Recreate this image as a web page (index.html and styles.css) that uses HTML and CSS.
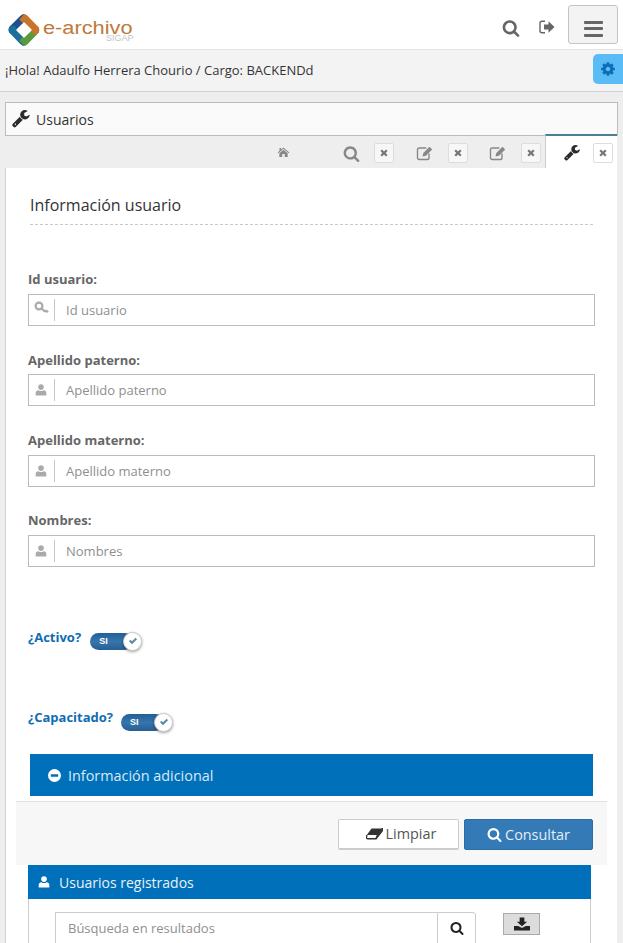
FILE: index.html
```html
<!DOCTYPE html>
<html lang="es">
<head>
<meta charset="utf-8">
<title>e-archivo</title>
<link rel="stylesheet" href="styles.css">
</head>
<body>
<svg class="defs" width="0" height="0" aria-hidden="true">
  <symbol id="i-search" viewBox="0 0 1792 1792"><path d="M1216 832q0-185-131.5-316.5t-316.5-131.5-316.5 131.5-131.5 316.5 131.5 316.5 316.5 131.5 316.5-131.5 131.5-316.5zm512 832q0 52-38 90t-90 38q-54 0-90-38l-343-342q-179 124-399 124-143 0-273.5-55.5t-225-150-150-225-55.5-273.5 55.5-273.5 150-225 225-150 273.5-55.5 273.5 55.5 225 150 150 225 55.5 273.5q0 220-124 399l343 343q37 37 37 90z"/></symbol>
  <symbol id="i-wrench" viewBox="0 0 1792 1792"><path d="M384 1344q0-26-19-45t-45-19-45 19-19 45 19 45 45 19 45-19 19-45zm644-420l-682 682q-37 37-90 37-52 0-91-37l-106-108q-38-36-38-90 0-53 38-91l681-681q39 98 114.5 173.5t173.5 114.5zm634-435q0 39-23 106-47 134-164.5 217.5t-258.5 83.5q-185 0-316.5-131.5t-131.5-316.5 131.5-316.5 316.5-131.5q58 0 121.5 16.5t107.5 46.5q16 11 16 28t-16 28l-293 169v224l193 107q5-3 79-48.5t135.5-81 70.5-35.5q15 0 23.5 10t8.5 25z"/></symbol>
  <symbol id="i-cog" viewBox="0 0 1792 1792"><path d="M1152 896q0-106-75-181t-181-75-181 75-75 181 75 181 181 75 181-75 75-181zm512-109v222q0 12-8 23t-20 13l-185 28q-19 54-39 91 35 50 107 138 10 12 10 25t-9 23q-27 37-99 108t-94 71q-12 0-26-9l-138-108q-44 23-91 38-16 136-29 186-7 28-36 28h-222q-14 0-24.5-8.5t-11.5-21.5l-28-184q-49-16-90-37l-141 107q-10 9-25 9-14 0-25-11-126-114-165-168-7-10-7-23 0-12 8-23 15-21 51-66.5t54-70.5q-27-50-41-99l-183-27q-13-2-21-12.5t-8-23.5v-222q0-12 8-23t19-13l186-28q14-46 39-92-40-57-107-138-10-12-10-24 0-10 9-23 26-36 98.5-107.5t94.5-71.5q13 0 26 10l138 107q44-23 91-38 16-136 29-186 7-28 36-28h222q14 0 24.5 8.5t11.5 21.5l28 184q49 16 90 37l142-107q9-9 24-9 13 0 25 10 129 119 165 170 7 8 7 22 0 12-8 23-15 21-51 66.5t-54 70.5q26 50 41 98l183 28q13 2 21 12.5t8 23.5z"/></symbol>
  <symbol id="i-user" viewBox="0 0 14 14"><circle cx="7" cy="3.6" r="3.3"/><path d="M.8 13.4V10.300C.8 8.500 2.300 7.200 4 7.200c.9.700 1.900 1 3 1s2.100-.3 3-1c1.700 0 3.200 1.300 3.200 3.100v3.100z"/></symbol>
  <symbol id="i-home" viewBox="0 0 14 12"><path d="M7 .5 14 6.500l-.8.900L7 2.200.8 7.400 0 6.500 2.200 4.600V1.200h2v1.700z"/><path d="M7 3.300 12 7.500V12H8.500V8.500h-3V12H2V7.500z"/></symbol>
  <symbol id="i-edit" viewBox="0 0 18 16"><path class="stroke" d="M13 8.500v4.200c0 1-.8 1.800-1.800 1.800H3.300c-1 0-1.800-.8-1.800-1.800V4.800c0-1 .8-1.800 1.800-1.800h7"/><path d="M6.500 11.500 7.300 8 13.500 1.800l2.700 2.700L10 10.700z"/></symbol>
  <symbol id="i-times" viewBox="0 0 8 8"><path d="M2 .4 4 2.400 6 .4 7.600 2 5.600 4 7.600 6 6 7.600 4 5.600 2 7.600.4 6 2.400 4 .4 2z"/></symbol>
  <symbol id="i-logout" viewBox="0 0 16 14"><path class="stroke" d="M6 1.200H3c-1.100 0-2 .9-2 2v7.600c0 1.100.9 2 2 2h3"/><path d="M5 4.500h4.500V1.200L15.500 7l-6 5.800V9.500H5z"/></symbol>
  <symbol id="i-key" viewBox="0 0 15 13"><circle class="stroke2" cx="5" cy="5" r="3.400"/><path class="stroke2" d="M7.500 7.500 10.500 10l2-.2 1.500 1.400"/></symbol>
  <symbol id="i-eraser" viewBox="0 0 17 12"><path d="M5.500.5H16.500L11.500 7H.8z"/><path class="stroke" d="M.8 7 .5 9.500c0 .6.400 1.200 1 1.200h8.500L11.500 7"/><path class="stroke" d="M11.500 7 16.500.5 16.200 3 10 10.700"/></symbol>
  <symbol id="i-minus" viewBox="0 0 14 14"><path fill-rule="evenodd" d="M7 0a7 7 0 1 0 0 14A7 7 0 0 0 7 0zM3 5.600h8v2.800H3z"/></symbol>
  <symbol id="i-download" viewBox="0 0 17 14"><path d="M6 0h5v4.500h3L8.500 9.500 3 4.500h3z"/><path d="M0 9h4.500l4 2.300 4-2.300H17v5H0z"/></symbol>
  <symbol id="i-check" viewBox="0 0 12 10"><path d="M1 5.200 2.800 3.400 4.800 5.400 9.200 1 11 2.800 4.800 9z"/></symbol>
</svg>

<header class="topbar">
  <div class="logo">
    <svg class="logo-mark" viewBox="0 0 34 34" aria-hidden="true">
      <path d="M17 0Q15 0 13 2L1.500 13.500Q0 15.500 1.500 20L7 23.500 12 17 17 11 22 6z" fill="#1f4f8f"/>
      <path d="M1.500 14Q-.5 17 1.500 20L13 32Q15 34 17 34L22 28 17 23 11 17 6 12z" fill="#1b6f9c"/>
      <path d="M17 34Q19 34 21 32L32.500 20Q34 17 32.500 14L28 12 23 17 17 23 12 28z" fill="#5b9a3c"/>
      <path d="M32.500 20Q34 17 32.500 14L21 2Q19 0 17 0L12 6 17 11 23 17 28 22z" fill="#c8742c"/>
      <path d="M17 9.500 24.500 17 17 24.500 9.500 17z" fill="#fff" stroke="#fff" stroke-width="1.500" stroke-linejoin="round"/>
    </svg>
    <div class="logo-text"><span class="logo-name">e-archivo</span><span class="logo-sub">SIGAP</span></div>
  </div>
  <div class="top-actions">
    <svg class="ico top-search"><use href="#i-search"/></svg>
    <svg class="ico top-logout"><use href="#i-logout"/></svg>
    <button class="menu-btn" type="button" aria-label="Menú"><span></span><span></span><span></span></button>
  </div>
</header>

<div class="greeting">
  <span>¡Hola! Adaulfo Herrera Chourio / Cargo: BACKENDd</span>
  <button class="gear" type="button" aria-label="Ajustes"><svg class="ico gear-ico"><use href="#i-cog"/></svg></button>
</div>

<div class="page-title"><svg class="ico title-ico"><use href="#i-wrench"/></svg><span>Usuarios</span></div>

<nav class="tabs">
  <div class="tab tab-home"><svg class="ico t-home"><use href="#i-home"/></svg></div>
  <div class="tab tab-search"><svg class="ico t-search"><use href="#i-search"/></svg><span class="close"><svg class="ico x"><use href="#i-times"/></svg></span></div>
  <div class="tab tab-edit"><svg class="ico t-edit"><use href="#i-edit"/></svg><span class="close"><svg class="ico x"><use href="#i-times"/></svg></span></div>
  <div class="tab tab-edit2"><svg class="ico t-edit"><use href="#i-edit"/></svg><span class="close"><svg class="ico x"><use href="#i-times"/></svg></span></div>
  <div class="tab tab-active"><svg class="ico t-wrench"><use href="#i-wrench"/></svg><span class="close"><svg class="ico x"><use href="#i-times"/></svg></span></div>
</nav>

<main class="sheet">
  <h2 class="section-title">Información usuario</h2>

  <div class="field field-first">
    <label>Id usuario:</label>
    <div class="input"><span class="addon"><svg class="ico key"><use href="#i-key"/></svg></span><span class="ph">Id usuario</span></div>
  </div>
  <div class="field">
    <label>Apellido paterno:</label>
    <div class="input"><span class="addon"><svg class="ico person"><use href="#i-user"/></svg></span><span class="ph">Apellido paterno</span></div>
  </div>
  <div class="field">
    <label>Apellido materno:</label>
    <div class="input"><span class="addon"><svg class="ico person"><use href="#i-user"/></svg></span><span class="ph">Apellido materno</span></div>
  </div>
  <div class="field">
    <label>Nombres:</label>
    <div class="input"><span class="addon"><svg class="ico person"><use href="#i-user"/></svg></span><span class="ph">Nombres</span></div>
  </div>

  <div class="switch-row switch-first">
    <span class="switch-label">¿Activo?</span>
    <span class="switch"><span class="si">SI</span><span class="knob"><svg class="ico tick"><use href="#i-check"/></svg></span></span>
  </div>
  <div class="switch-row switch-second">
    <span class="switch-label">¿Capacitado?</span>
    <span class="switch"><span class="si">SI</span><span class="knob"><svg class="ico tick"><use href="#i-check"/></svg></span></span>
  </div>

  <div class="extra-bar"><svg class="ico minus"><use href="#i-minus"/></svg><span>Información adicional</span></div>

  <div class="actions">
    <button class="btn btn-light" type="button"><svg class="ico eraser"><use href="#i-eraser"/></svg>Limpiar</button>
    <button class="btn btn-primary" type="button"><svg class="ico btn-search"><use href="#i-search"/></svg>Consultar</button>
  </div>

  <section class="panel">
    <div class="panel-head"><svg class="ico panel-user"><use href="#i-user"/></svg><span>Usuarios registrados</span></div>
    <div class="panel-body">
      <div class="search-group">
        <span class="search-input">Búsqueda en resultados</span>
        <span class="search-btn"><svg class="ico s-search"><use href="#i-search"/></svg></span>
      </div>
      <span class="dl-btn"><svg class="ico dl"><use href="#i-download"/></svg></span>
    </div>
  </section>
</main>
</body>
</html>
```
FILE: styles.css
```css
* { box-sizing: border-box; }
html, body { margin: 0; height: 943px; overflow: hidden; }
body { background: #eeeeee; font-family: "Open Sans", sans-serif; color: #333; font-size: 13px; }
.defs { position: absolute; }
.ico { display: block; fill: currentColor; flex: none; }
.stroke { fill: none; stroke: currentColor; stroke-width: 1.4; }
.stroke2 { fill: none; stroke: currentColor; stroke-width: 2.2; }
button { font-family: inherit; }

.topbar { height: 50px; background: #fff; border-bottom: 1px solid #e3e3e3; display: flex; justify-content: space-between; padding: 5px 5px 0 8px; }
.logo { display: flex; align-items: flex-start; padding-top: 9px; }
.logo-mark { width: 32px; height: 32px; display: block; }
.logo-text { position: relative; margin-left: 3px; width: 92px; }
.logo-name { position: absolute; left: 0; top: 8px; font-family: "Liberation Sans", sans-serif; font-size: 18px; line-height: 13px; color: #bd7a3b; transform: scaleX(1.21); transform-origin: left; white-space: nowrap; }
.logo-sub { position: absolute; left: 63px; top: 21px; font-family: "Liberation Sans", sans-serif; font-size: 9px; line-height: 6px; color: #c5c5c5; }
.top-actions { display: flex; align-items: flex-start; color: #666; }
.top-search { width: 18px; height: 18px; margin: 14px 0 0 0; }
.top-logout { width: 16px; height: 14px; margin: 15px 0 0 19px; }
.menu-btn { width: 50px; height: 39px; margin-left: 13px; background: #f3f3f3; border: 1px solid #c4c4c4; border-radius: 3px; padding: 12px 0 0 15px; display: block; }
.menu-btn span { display: block; width: 19px; height: 3px; background: #666; margin-bottom: 3.500px; border-radius: 1px; }

.greeting { height: 42px; background: #f3f3f3; border-bottom: 1px solid #d2d2d2; display: flex; justify-content: space-between; align-items: flex-start; padding-left: 5px; font-size: 13px; line-height: 41px; color: #333; }
.gear { width: 30px; height: 30px; margin-top: 4px; border: 0; border-radius: 5px 0 0 5px; background: #5abcf7; padding: 0; color: #0a6db5; display: flex; align-items: center; justify-content: center; }
.gear-ico { width: 16px; height: 16px; }

.page-title { margin: 10px 5px 0 5px; height: 34px; background: #fafafa; border: 1px solid #bcbcbc; display: flex; align-items: center; padding-left: 6px; font-size: 14px; color: #333; }
.title-ico { width: 19px; height: 19px; margin-right: 5px; color: #2b2b2b; }

.tabs { height: 32px; display: flex; position: relative; color: #888; }
.tab { display: flex; align-items: flex-start; flex: none; padding-top: 7px; }
.tab-home { margin-left: 277px; width: 66px; padding-top: 11px; }
.t-home { width: 13px; height: 10px; }
.tab-search { width: 72px; }
.t-search { width: 17px; height: 17px; margin: 2px 14px 0 0; }
.tab-edit { width: 73px; padding-left: 1px; }
.tab-edit2 { width: 57px; padding-left: 1px; }
.t-edit { width: 18px; height: 16px; margin: 2px 14px 0 0; }
.close { width: 20px; height: 20px; background: #f7f7f7; border: 1px solid #ddd; border-radius: 2px; display: flex; align-items: center; justify-content: center; color: #777; }
.x { width: 8px; height: 8px; }
.tab-active { width: 72px; height: 34px; margin-top: -2px; background: #fff; border-top: 2px solid #4d7f94; border-left: 1px solid #ccc; padding: 7px 0 0 18px; color: #2b2b2b; position: relative; }
.t-wrench { width: 17px; height: 17px; margin: 2px 12px 0 0; }
.tab-active .close { background: #fff; }

.sheet { margin: 0 6px 0 5px; background: #fff; border-left: 1px solid #d2d2d2; height: 800px; position: relative; padding: 1px 0 0 0; }
.section-title { margin: 23px 24px 0 24px; padding-bottom: 9px; height: 33px; border-bottom: 1px dashed #c9c9c9; font-size: 16px; line-height: 26px; font-weight: 400; color: #333; }

.field { margin: 0 22px 0 22px; }
.field-first { margin-top: 44.400px; }
.field + .field { margin-top: 23.730px; }
.field label { display: block; font-weight: 700; font-size: 13px; line-height: 20px; color: #666; margin-bottom: 4.600px; }
.input { height: 32px; border: 1px solid #bbb; background: #fff; display: flex; align-items: center; }
.addon { width: 26px; height: 22px; border-right: 1px solid #c6c6c6; display: flex; align-items: center; justify-content: center; color: #aaa; padding-right: 1px; margin-right: 11px; }
.key { width: 15px; height: 13px; margin-top: -5px; }
.person { width: 12px; height: 12px; }
.ph { color: #8f8f8f; font-size: 13px; }

.switch-row { margin-left: 22px; display: flex; align-items: flex-start; }
.switch-first { margin-top: 60px; }
.switch-first .switch-label { margin-right: 9px; }
.switch-second { margin-top: 56px; }
.switch-second .switch { margin-top: 6px; }
.switch-label { font-weight: 700; font-size: 13px; line-height: 20px; color: #0e6db3; margin-right: 8px; }
.switch { width: 52px; height: 19px; margin-top: 5px; position: relative; display: block; }
.si { position: absolute; left: 0; top: 1px; width: 43px; height: 17px; border-radius: 9px; background: linear-gradient(#215f95, #3775ae 50%, #275f92); color: #fff; font-family: "Liberation Sans", sans-serif; font-weight: 700; font-size: 9px; line-height: 17px; padding-left: 9px; }
.knob { position: absolute; right: 0; top: 0; width: 19px; height: 19px; border-radius: 50%; background: #fff; border: 1px solid #ccc; box-shadow: 0 1px 3px rgba(0,0,0,.4); display: flex; align-items: center; justify-content: center; color: #5a8aa5; }
.tick { width: 10px; height: 8px; }

.extra-bar { margin: 22px 24px 0 24px; height: 42px; background: #0070ba; color: #d9e9f5; display: flex; align-items: center; padding: 1px 0 0 18px; font-size: 14.400px; }
.minus { width: 13px; height: 13px; margin-right: 7px; color: #fff; }

.actions { margin: 5px 10px 0 10px; height: 64px; background: #f7f7f7; border-top: 1px solid #e0e0e0; display: flex; justify-content: flex-end; align-items: flex-start; padding: 17px 14px 0 0; }
.btn { height: 31px; border-radius: 2px; font-size: 14.400px; display: flex; align-items: center; justify-content: center; }
.btn-light { width: 121px; background: #fff; border: 1px solid #ccc; border-bottom-width: 2px; color: #555; margin-right: 5px; padding: 0 0 0 5px; }
.eraser { width: 17px; height: 12px; margin-right: 3px; color: #333; }
.btn-primary { width: 129px; background: #337ab7; border: 1px solid #2e6da4; color: #e3edf6; }
.btn-search { width: 15px; height: 15px; margin-right: 3px; color: #fff; }

.panel { margin: 0 26px 0 22px; }
.panel-head { height: 34px; background: #0070ba; color: #e9f2f9; display: flex; align-items: center; padding: 1px 0 0 10px; font-size: 14px; }
.panel-user { width: 12px; height: 12px; color: #fff; margin: -1px 9px 0 0; }
.panel-body { height: 60px; border-left: 1px solid #ccc; border-right: 1px solid #ccc; background: #fff; display: flex; align-items: flex-start; padding: 13px 0 0 26px; }
.search-group { width: 421px; display: flex; height: 40px; }
.search-input { flex: 1; border: 1px solid #ccc; border-right: 0; padding-left: 12px; color: #8f8f8f; font-size: 13px; line-height: 31px; }
.search-btn { width: 39px; border: 1px solid #ccc; border-radius: 0 3px 0 0; display: flex; justify-content: center; padding-top: 8px; color: #222; }
.s-search { width: 14px; height: 14px; }
.dl-btn { width: 37px; height: 22px; margin: 1px 0 0 27px; background: #dcdcdc; border: 1px solid #aaa; display: flex; align-items: center; justify-content: center; color: #222; }
.dl { width: 16px; height: 14px; }
```
